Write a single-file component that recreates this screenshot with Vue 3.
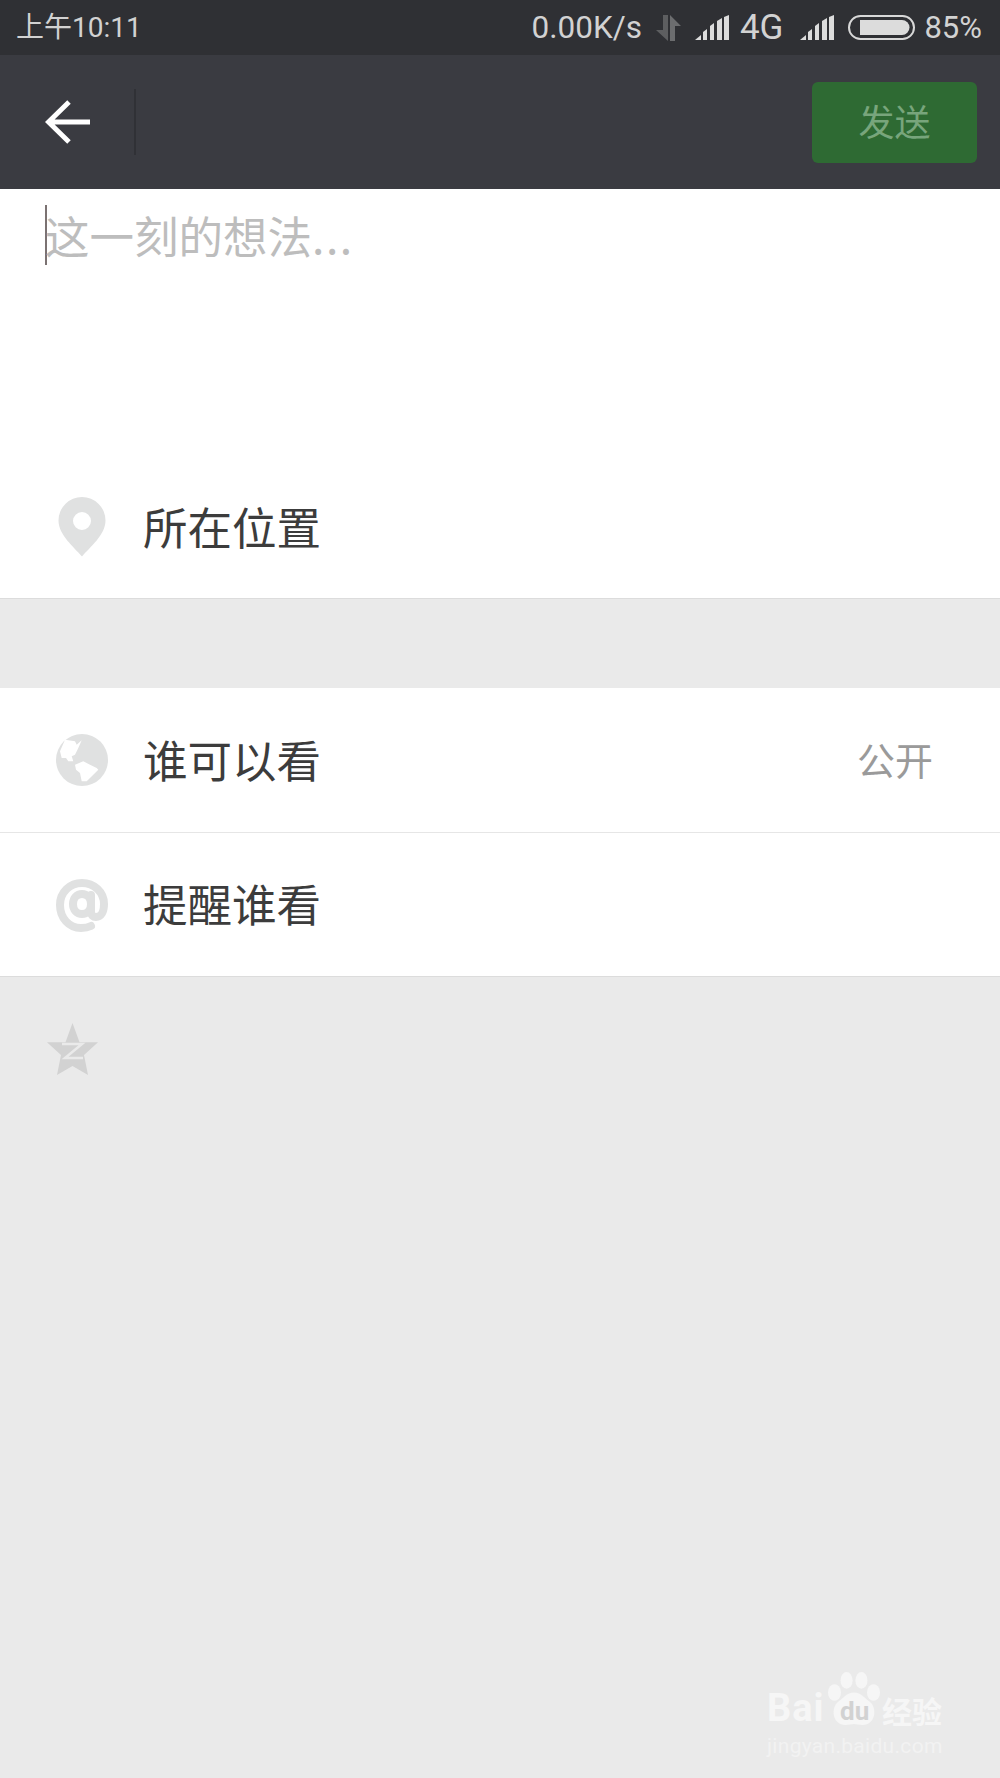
<script setup>
const signalBars = [
  'M0 25 L6 20 V25 Z',
  'M8 25 V17 L12 14 V25 Z',
  'M15 25 V11 L19 8 V25 Z',
  'M22 25 V6 L27 3 V25 Z',
  'M29 25 V2 L34 0 V25 Z'
]
const groups = [
  [{ id: 'globe', label: '谁可以看', value: '公开' }, { id: 'at', label: '提醒谁看' }]
]
</script>

<template>
  <div class="page">
    <header class="status">
      <span class="time">上午10:11</span>
      <div class="status-right">
        <span class="speed">0.00K/s</span>
        <svg class="arrows" width="26" height="26" viewBox="0 0 26 26">
          <path d="M8 0h5v26L1 15h7z" fill="#5d5e60" />
          <path d="M15 0l11 11h-6v15h-5z" fill="#6c6d6f" />
        </svg>
        <svg class="signal" width="35" height="25" viewBox="0 0 35 25">
          <path v-for="d in signalBars" :key="d" :d="d" fill="#dcdcdc" />
        </svg>
        <span class="net">4G</span>
        <svg class="signal sim2" width="35" height="25" viewBox="0 0 35 25">
          <path v-for="d in signalBars" :key="d" :d="d" fill="#dcdcdc" />
        </svg>
        <svg class="battery" width="67" height="25" viewBox="0 0 67 25">
          <rect x="1" y="1" width="65" height="23" rx="11.500" fill="none" stroke="#d8d8d8" stroke-width="2" />
          <path d="M12 5h42a7.500 7.500 0 0 1 0 15H12z" fill="#dcdcdc" />
        </svg>
        <span class="pct">85%</span>
      </div>
    </header>

    <nav class="bar">
      <svg class="back" width="46" height="46" viewBox="0 0 46 46">
        <path d="M45 23H4M24 3L3.500 23 24 43" fill="none" stroke="#fff" stroke-width="5" />
      </svg>
      <span class="divider"></span>
      <button class="send">发送</button>
    </nav>

    <section class="compose">
      <div class="input">
        <span class="caret"></span>
        <span class="placeholder">这一刻的想法<span class="dots">...</span></span>
      </div>
      <div class="row location">
        <span class="icon">
          <svg width="48" height="60" viewBox="0 0 48 60">
            <path fill-rule="evenodd" d="M24 0a23.500 23.500 0 0 1 23.500 23.500C47.500 38 32 50 24 59.500 16 50 .500 38 .500 23.500A23.500 23.500 0 0 1 24 0zm0 15a9 9 0 1 0 0 18 9 9 0 0 0 0-18z" fill="#e0e1e1" />
          </svg>
        </span>
        <span class="label">所在位置</span>
      </div>
    </section>

    <section v-for="(group, g) in groups" :key="g" class="group">
      <div v-for="item in group" :key="item.id" class="row">
        <span class="icon">
          <svg v-if="item.id === 'globe'" width="52" height="52" viewBox="0 0 52 52">
            <circle cx="26" cy="26" r="26" fill="#e0e1e1" />
            <path d="M9 5.700L19 7.300 20.700 10.700 25.700 6.300 22.300 14 19 20.700 15.700 22.300 17.300 27.300 12.300 27.300 10 24 5.700 24 4 17.300Z" fill="#fff" />
            <path d="M19 30.700L27.300 27.300 34 30.700 40.700 34 42.300 35.700 37.300 40.700 30.700 47.300 25.700 47.300 24 39 20 35.700Z" fill="#fff" />
          </svg>
          <svg v-else width="54" height="54" viewBox="0 0 54 54">
            <path d="M36 48C33 49.500 30 50 26 50 14 50 5 40 5 27S15 5 27 5s22 9 22 21c0 8-3 13-8 13-3 0-5-2-5-5V17M36 26c0 6-4 10-9 10s-9-4-9-10 4-10 9-10 9 4 9 10z" fill="none" stroke="#e0e1e1" stroke-width="8" stroke-linecap="round" />
          </svg>
        </span>
        <span class="label">{{ item.label }}</span>
        <span v-if="item.value" class="value">{{ item.value }}</span>
      </div>
    </section>

    <section class="rest">
      <svg class="star" width="52" height="52" viewBox="0 0 52 52">
        <path d="M25.500 0L32.500 19.300 51 19.300 37 32 41 52 25.500 43 10 52 14 32 0 19.300 18.500 19.300Z" fill="#d2d2d2" />
        <path d="M15 21H35L18 35H36" fill="none" stroke="#eaeaea" stroke-width="2.500" />
      </svg>
    </section>

    <div class="watermark">
      <div class="wm-top">
        <span class="wm-bai">Bai</span>
        <span class="wm-paw">
          <svg width="52" height="54" viewBox="0 0 56 58">
            <g fill="#f6f6f6">
              <ellipse cx="7" cy="22" rx="7" ry="9" />
              <ellipse cx="20" cy="9" rx="6.500" ry="9" />
              <ellipse cx="36" cy="9" rx="6.500" ry="9" />
              <ellipse cx="49" cy="22" rx="7" ry="9" />
              <path d="M28 22c8 0 11 6 17 10 8 6 7 25-8 25-4 0-6-1-9-1s-5 1-9 1C4 57 3 38 11 32c6-4 9-10 17-10z" />
            </g>
          </svg>
          <span class="wm-du">du</span>
        </span>
        <span class="wm-jy">经验</span>
      </div>
      <div class="wm-url">jingyan.baidu.com</div>
    </div>
  </div>
</template>

<style scoped>
.page {
  position: relative;
  width: 1000px;
  height: 1778px;
  overflow: hidden;
  display: flex;
  flex-direction: column;
  background: #eaeaea;
  font-family: "Roboto", "Noto Sans CJK SC", sans-serif;
}
.status {
  height: 55px;
  flex: none;
  display: flex;
  align-items: center;
  justify-content: space-between;
  padding: 0 18px 0 16px;
  background: #2f3034;
  color: #d2d2d2;
  line-height: 55px;
}
.time { font-size: 28px; }
.status-right {
  display: flex;
  align-items: center;
  font-size: 31px;
}
.speed { margin-right: 13px; font-size: 31.500px; }
.arrows { margin-right: 14px; }
.signal { margin-right: 10px; }
.net { margin-right: 17px; font-size: 35px; }
.sim2 { margin-right: 13px; }
.battery { margin-right: 9px; }
.bar {
  height: 134px;
  flex: none;
  display: flex;
  align-items: center;
  padding: 0 23px 0 45px;
  background: #3a3b41;
}
.divider {
  width: 2px;
  height: 66px;
  margin-left: 43px;
  background: #303136;
}
.send {
  margin-left: auto;
  width: 165px;
  height: 81px;
  padding: 0 0 4px;
  border: 0;
  border-radius: 6px;
  background: #2e6a33;
  color: #78a57c;
  font: 36px "Noto Sans CJK SC", sans-serif;
}
.compose {
  flex: none;
  background: #fff;
  border-bottom: 1px solid #dcdcdc;
}
.input {
  position: relative;
  height: 267px;
  box-sizing: border-box;
  padding: 12px 0 0 45px;
  display: flex;
  align-items: flex-start;
}
.caret {
  flex: none;
  width: 2px;
  height: 60px;
  margin-top: 4px;
  background: #7b7272;
}
.placeholder {
  font: 44.500px/60px "Noto Sans CJK SC", sans-serif;
  color: #bdbdbd;
  margin: 4px 0 0 -2px;
}
.dots {
  letter-spacing: 1.500px;
}
.row {
  height: 144px;
  box-sizing: border-box;
  display: flex;
  align-items: center;
  padding-right: 67px;
  background: #fff;
}
.location { height: 142px; }
.icon {
  flex: none;
  width: 54px;
  margin: 0 34px 0 55px;
  display: flex;
  justify-content: center;
}
.label {
  font: 44.500px "Noto Sans CJK SC", sans-serif;
  color: #3c3c3c;
  margin-bottom: 4px;
}
.value {
  margin: 0 0 4px auto;
  font: 38px "Noto Sans CJK SC", sans-serif;
  color: #9a9a9a;
}
.group {
  flex: none;
  margin-top: 89px;
  background: #fff;
}
.group .row {
  border-bottom: 1px solid #dcdcdc;
}
.group .row:first-child {
  border-bottom-color: #e6e6e6;
  height: 145px;
}
.rest {
  flex: 1;
  padding: 46px 0 0 47px;
}
.star { display: block; }
.watermark {
  position: absolute;
  left: 767px;
  top: 1672px;
  width: 190px;
  color: #f6f6f6;
}
.wm-top {
  display: flex;
  align-items: flex-end;
  height: 60px;
}
.wm-bai {
  font: 700 38px/42px "Roboto", sans-serif;
  letter-spacing: 1px;
  width: 61px;
  margin-bottom: 3px;
}
.wm-paw {
  position: relative;
  width: 52px;
  height: 60px;
}
.wm-paw svg {
  position: absolute;
  left: 0;
  top: 0;
}
.wm-du {
  position: absolute;
  left: 12px;
  bottom: 8px;
  font: 700 26px/26px "Roboto", sans-serif;
  color: #d2d2d2;
}
.wm-jy {
  font: 700 30px/34px "Noto Sans CJK SC", sans-serif;
  margin: 0 0 5px 2px;
  white-space: nowrap;
}
.wm-url {
  font: 21px/26px "Roboto", sans-serif;
  letter-spacing: 0.300px;
  white-space: nowrap;
  margin-top: 1px;
  color: #f2f2f2;
}
</style>
